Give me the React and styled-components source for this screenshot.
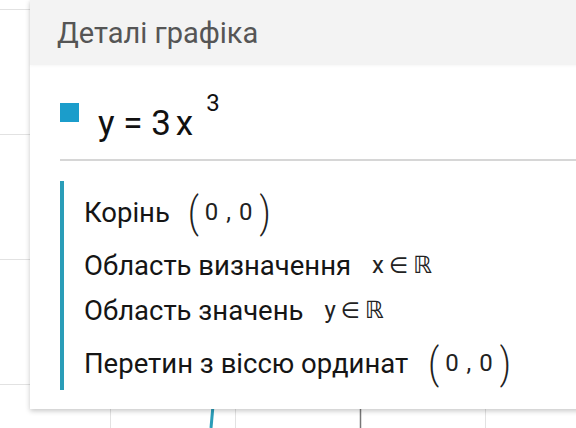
import React from 'react'
import styled, { createGlobalStyle } from 'styled-components'

const Global = createGlobalStyle`
  html, body {
    margin: 0;
    padding: 0;
    background: #fff;
    font-family: Roboto, "Noto Sans", sans-serif;
    overflow: hidden;
  }
`

const Stage = styled.div`
  position: relative;
  width: 576px;
  height: 428px;
  overflow: hidden;
  background: #fff;
`

const Graph = styled.svg`
  position: absolute;
  left: 0;
  top: 0;
`

const Panel = styled.div`
  position: relative;
  z-index: 1;
  margin-left: 30px;
  width: 580px;
  background: #fff;
  box-shadow: 0 2px 5px rgba(0, 0, 0, 0.22);
`

const Header = styled.div`
  height: 65px;
  background: #f3f3f3;
  display: flex;
  align-items: center;
  padding-left: 27px;
  font-size: 29px;
  color: #555;
  box-shadow: 0 1px 3px rgba(0, 0, 0, 0.04);
`

const Body = styled.div`
  padding: 0 0 19px 30px;
`

const Equation = styled.div`
  display: flex;
  align-items: flex-start;
  height: 96px;
  padding-top: 38px;
  box-sizing: border-box;
  border-bottom: 2px solid #d6d6d6;
`

const Swatch = styled.div`
  width: 19px;
  height: 19px;
  background: ${(p) => p.color};
`

const Formula = styled.div`
  margin-left: 19px;
  margin-top: 1px;
  font-size: 35px;
  color: #111;
  display: flex;
  align-items: flex-start;
  line-height: 40px;
`

const Variable = styled.span`
  margin-left: 5px;
`

const Sup = styled.span`
  font-size: 24px;
  line-height: 24px;
  margin-left: 13px;
  margin-top: -13px;
`

const Props = styled.div`
  margin-top: 20px;
  border-left: 4px solid #2a9db8;
  padding: 9px 0 5px 20px;
  display: flex;
  flex-direction: column;
  gap: 17px;
`

const Row = styled.div`
  display: flex;
  align-items: center;
  height: ${(p) => (p.tall ? 44 : 28)}px;
  font-size: 27.5px;
  color: #151515;
  white-space: nowrap;
`

const Value = styled.span`
  display: inline-flex;
  align-items: center;
  margin-left: ${(p) => p.gap || 20}px;
  font-size: 24px;
  color: #222;
`

const Paren = styled.span`
  display: inline-block;
  font-size: 34px;
  font-weight: 300;
  transform: scaleY(1.25);
  line-height: 1;
`

const Digits = styled.span`
  margin: 0 6px;
  letter-spacing: 1px;
`

const Member = styled.span`
  margin: 0 5px;
  font-family: "DejaVu Sans", sans-serif;
  font-size: 22px;
`

const Reals = styled.span`
  font-family: "DejaVu Sans", sans-serif;
  font-size: 24px;
`

const Point = () => (
  <>
    <Paren>(</Paren>
    <Digits>0 , 0</Digits>
    <Paren>)</Paren>
  </>
)

const App = () => {
  const grid = [110, 235, 485]
  const rows = [9, 134, 259, 384]
  return (
    <Stage>
      <Global />
      <Graph width="576" height="428">
        {rows.map((y) => (
          <line key={y} x1="0" x2="576" y1={y + 0.5} y2={y + 0.5} stroke="#e2e2e2" />
        ))}
        {grid.map((x) => (
          <line key={x} x1={x + 0.5} x2={x + 0.5} y1="0" y2="428" stroke="#e2e2e2" />
        ))}
        <line x1="360.5" x2="360.5" y1="0" y2="428" stroke="#777" strokeWidth="1.5" />
        <path d="M213.5 400 L211 428" stroke="#2a9db8" strokeWidth="3" fill="none" />
      </Graph>
      <Panel>
        <Header>Деталі графіка</Header>
        <Body>
          <Equation>
            <Swatch color="#1b9dcb" />
            <Formula>
              y = 3<Variable>x</Variable>
              <Sup>3</Sup>
            </Formula>
          </Equation>
          <Props>
            <Row tall>
              Корінь
              <Value gap={18}><Point /></Value>
            </Row>
            <Row>
              Область визначення
              <Value gap={21}>
                x<Member>∈</Member><Reals>ℝ</Reals>
              </Value>
            </Row>
            <Row>
              Область значень
              <Value gap={21}>
                y<Member>∈</Member><Reals>ℝ</Reals>
              </Value>
            </Row>
            <Row tall>
              Перетин з віссю ординат
              <Value><Point /></Value>
            </Row>
          </Props>
        </Body>
      </Panel>
    </Stage>
  )
}

export default App
